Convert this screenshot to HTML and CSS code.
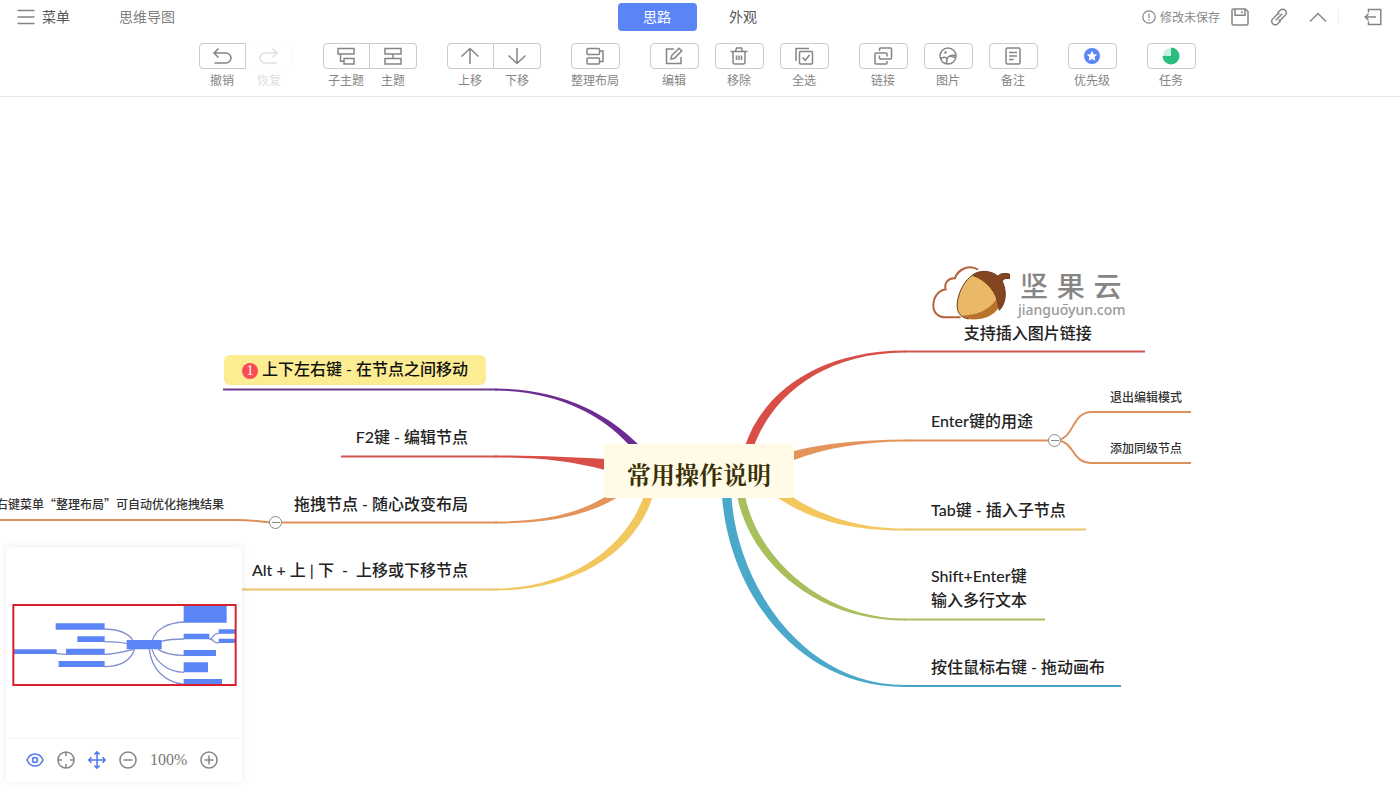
FILE: index.html
```html
<!DOCTYPE html>
<html lang="zh-CN">
<head>
<meta charset="utf-8">
<meta name="viewport" content="width=device-width, initial-scale=1">
<title>思维导图</title>
<link rel="stylesheet" href="styles.css">
</head>
<body>
<div class="app">
  <header class="header">
    <div class="topbar">
      <div class="topbar-left">
        <button class="menu-btn" type="button">
          <svg class="menu-icon" width="18" height="16" viewBox="0 0 18 16"><path d="M.5 1.5h17M.5 8h17M.5 14.5h17"/></svg>
          <span class="bar-text">菜单</span>
        </button>
        <span class="doc-title bar-text">思维导图</span>
      </div>
      <nav class="tabs">
        <button class="tab tab-active" type="button">思路</button>
        <button class="tab" type="button">外观</button>
      </nav>
      <div class="topbar-right">
        <span class="save-state">
          <svg width="14" height="14" viewBox="0 0 14 14"><circle cx="7" cy="7" r="6.2"/><path d="M7 3.5v4.4M7 9.2v1.3"/></svg>
          <span class="bar-text">修改未保存</span>
        </span>
        <button class="icon-btn" type="button" aria-label="保存"><svg width="18" height="18" viewBox="0 0 18 18"><path d="M2.500 1h11.800L17 3.500v12a1.500 1.500 0 0 1-1.500 1.500h-13A1.500 1.500 0 0 1 1 15.500v-13A1.500 1.500 0 0 1 2.500 1zM4 1v6.200h10V1M11 3v2.200"/></svg></button>
        <button class="icon-btn" type="button" aria-label="复制链接"><svg width="18" height="18" viewBox="0 0 18 18"><path d="M5.700 12.300l6.600-6.600M7.300 5.200l2.900-2.900a3.300 3.300 0 0 1 5 0a3.300 3.300 0 0 1 0 5l-4 4a3.400 3.400 0 0 1-2.600 1M10.700 12.800l-2.900 2.900a3.300 3.300 0 0 1-5 0a3.300 3.300 0 0 1 0-5l4-4a3.400 3.400 0 0 1 2.600-1"/></svg></button>
        <button class="icon-btn" type="button" aria-label="收起"><svg width="18" height="18" viewBox="0 0 18 18"><path d="M1 13.500l8-8 8 8"/></svg></button>
        <span class="divider"></span>
        <button class="icon-btn" type="button" aria-label="退出"><svg width="18" height="18" viewBox="0 0 18 18"><path d="M4.500 4.500V1.500h12.300v15H4.500v-3M12 9H1M4.500 5.800L1.200 9l3.300 3.200"/></svg></button>
      </div>
    </div>

    <div class="toolbar">
      <div class="joined">
        <button class="tool" type="button"><span class="tool-box"><svg width="20" height="18" viewBox="0 0 20 18"><path d="M6.500 1.500L2 6l4.500 4.500M2.500 6H14a5 5 0 0 1 0 10H2.500"/></svg></span><span>撤销</span></button>
        <button class="tool" type="button" disabled><span class="tool-box"><svg width="20" height="18" viewBox="0 0 20 18"><path d="M13.500 1.500L18 6l-4.500 4.500M17.500 6H6a5 5 0 0 0 0 10h11.500"/></svg></span><span>恢复</span></button>
      </div>
      <div class="joined">
        <button class="tool" type="button"><span class="tool-box"><svg width="20" height="18" viewBox="0 0 20 18"><path d="M2 1.500h16v5.500H2zM8 11.500h10V17H8zM4.500 7v7.200H8"/></svg></span><span>子主题</span></button>
        <button class="tool" type="button"><span class="tool-box"><svg width="20" height="18" viewBox="0 0 20 18"><path d="M2 1.500h16v5.500H2zM2 11.500h16V17H2zM10 7v4.500"/></svg></span><span>主题</span></button>
      </div>
      <div class="joined">
        <button class="tool" type="button"><span class="tool-box"><svg width="20" height="18" viewBox="0 0 20 18"><path d="M10 17V1.500M1.500 9.500l8.500-8 8.500 8"/></svg></span><span>上移</span></button>
        <button class="tool" type="button"><span class="tool-box"><svg width="20" height="18" viewBox="0 0 20 18"><path d="M10 1v15.500M1.500 8.500l8.500 8 8.500-8"/></svg></span><span>下移</span></button>
      </div>
      <button class="tool" type="button"><span class="tool-box"><svg width="20" height="18" viewBox="0 0 20 18"><rect x="2" y="1.500" width="12.500" height="6" rx="1"/><rect x="2" y="11" width="12.500" height="6" rx="1"/><path d="M14.500 4H18v10.500h-3.500"/></svg></span><span>整理布局</span></button>
      <div class="set">
        <button class="tool" type="button"><span class="tool-box"><svg width="20" height="18" viewBox="0 0 20 18"><path d="M10 2H2.500v14.500H17V10M7 12l.7-3.500L15 1.200l2.800 2.600-7.300 7.500z"/></svg></span><span>编辑</span></button>
        <button class="tool" type="button"><span class="tool-box"><svg width="20" height="18" viewBox="0 0 20 18"><path d="M1.500 4.500h17M4 4.500V15a2 2 0 0 0 2 2h8a2 2 0 0 0 2-2V4.500M6.500 4.200L7.500 1h5l1 3.200M7.500 8.500v4.500M10 8.500v4.500M12.500 8.500v4.500"/></svg></span><span>移除</span></button>
        <button class="tool" type="button"><span class="tool-box"><svg width="20" height="18" viewBox="0 0 20 18"><rect x="5.500" y="4.500" width="13" height="12.500" rx="1"/><path d="M2 14V1.500h13M8.500 10.500l2.800 2.800L15.500 8"/></svg></span><span>全选</span></button>
      </div>
      <div class="set">
        <button class="tool" type="button"><span class="tool-box"><svg width="20" height="18" viewBox="0 0 20 18"><path d="M6.500 4V2a1 1 0 0 1 1-1h10a1 1 0 0 1 1 1v9a1 1 0 0 1-1 1h-10a1 1 0 0 1-1-1V8.500M14 14v2a1 1 0 0 1-1 1H3a1 1 0 0 1-1-1V7a1 1 0 0 1 1-1h10a1 1 0 0 1 1 1v2.500"/></svg></span><span>链接</span></button>
        <button class="tool" type="button"><span class="tool-box"><svg width="20" height="18" viewBox="0 0 20 18"><circle cx="10" cy="9" r="8"/><circle cx="7.500" cy="5.500" r=".6"/><path d="M2.500 12c3-3 6-2 6.500.5.200 1.500-.2 3-.8 4M8.800 12.200c1-3 4.500-4.700 9-3.700M11.500 9l6 1.500"/></svg></span><span>图片</span></button>
        <button class="tool" type="button"><span class="tool-box"><svg width="20" height="18" viewBox="0 0 20 18"><rect x="3" y="1" width="14" height="16" rx="1.500"/><path d="M6 5.500h8M6 9h8M6 12.500h4.500"/></svg></span><span>备注</span></button>
      </div>
      <button class="tool" type="button"><span class="tool-box"><svg width="20" height="18" viewBox="0 0 20 18"><circle class="fill-blue" cx="10" cy="9" r="8"/><path class="fill-white" d="M10 3.800l1.600 3.400 3.700.4-2.800 2.500.8 3.700-3.300-1.900-3.300 1.900.8-3.700-2.800-2.500 3.700-.4z"/></svg></span><span>优先级</span></button>
      <button class="tool" type="button"><span class="tool-box"><svg width="20" height="18" viewBox="0 0 20 18"><circle class="fill-mint" cx="10" cy="9" r="8"/><path class="fill-green" d="M10 9V.5a8.500 8.500 0 1 1-8.500 8.500z"/></svg></span><span>任务</span></button>
    </div>
  </header>

  <main class="canvas">
    <div class="stage">
      <svg class="branches" width="1400" height="691" viewBox="0 97 1400 691">
        <g class="red">
          <path d="M745 446C762 395 815 351 905 350.500V352.500C822 353 772 397 754 446z"/>
          <path d="M605 459C570 457 540 455.500 495 455.500V457.500C540 457.500 570 461 605 470z"/>
          <path class="line" d="M904 351.500h241M341 456.500h156"/>
        </g>
        <g class="orange">
          <path d="M794 451C825 443 860 440 905 439.500V441.500C865 441.500 825 448 794 460z"/>
          <path d="M605 497C575 515 540 521.500 495 521.500V523.500C545 523.500 585 517 618 497z"/>
          <path class="line" d="M904 440.500h150C1076 440 1070 412 1092 412h99M1054 440C1076 440 1070 463 1092 463h99M497 522.500H275C262 522.500 258 520 236 520H0"/>
        </g>
        <g class="yellow">
          <path d="M791 496C812 510 850 529 905 528.500V530.500C845 531 805 517 775 496z"/>
          <path d="M644 496C624 552 565 588.500 495 588.500V590.500C570 590.500 634 556 653 496z"/>
          <path class="line" d="M904 529.500h182M220 589.500h277"/>
        </g>
        <g class="green">
          <path d="M745 496C758 560 825 619 905 618.500V620.500C820 620.500 752 567 737 496z"/>
          <path class="line" d="M904 619.500h141"/>
        </g>
        <g class="blue">
          <path d="M731.500 496C736 580 800 685 905 685V687C797 687.500 729 592 722 496z"/>
          <path class="line" d="M904 686h217"/>
        </g>
        <g class="purple">
          <path d="M639 445C606 412 560 389 495 388.500V390.500C555 391 600 413 629 445z"/>
          <path class="line" d="M223 389.500h274"/>
        </g>
      </svg>

      <div class="node root">常用操作说明</div>

      <div class="node image-node">
        <div class="brand">
          <svg class="acorn" width="80" height="58" viewBox="30 42 240 174">
            <path class="cloud" d="M122 202H76C54 202 40 187 40 167C40 142 54 122 77 118C72 99 84 84 105 85C113 59 147 41 174 59"/>
            <path class="cap" d="M158 75C175 60 214 60 234 79C237 72 250 68 268 72L269 86C257 84 248 87 247 95C260 120 260 158 238 181C235 150 190 90 158 75z"/>
            <path class="nut" d="M157 76C196 88 232 124 236 174C218 202 180 213 146 207C119 202 109 185 112 158C116 122 136 90 157 76z"/>
            <path class="nut-shade" d="M236 172C218 201 180 212 146 206C137 204 130 201 125 197C168 196 204 184 229 148C233 156 235 164 236 172z"/>
            <path class="nut-edge" d="M146 207C119 202 109 185 112 158C116 122 136 90 157 76C196 88 232 124 236 174"/>
          </svg>
          <div class="brand-words">
            <div class="brand-cn"><span>坚</span><span>果</span><span>云</span></div>
            <div class="brand-url">jiangu<span class="brand-o">o</span>yun.com</div>
          </div>
        </div>
        <span>支持插入图片链接</span>
      </div>
      <div class="node n-enter">Enter键的用途</div>
      <div class="node n-tab">Tab键 - 插入子节点</div>
      <div class="node n-shift">Shift+Enter键<br>输入多行文本</div>
      <div class="node n-drag">按住鼠标右键 - 拖动画布</div>
      <div class="node leaf n-exit">退出编辑模式</div>
      <div class="node leaf n-sibling">添加同级节点</div>

      <div class="node n-arrows"><span class="priority">1</span><span>上下左右键 - 在节点之间移动</span></div>
      <div class="node n-f2">F2键 - 编辑节点</div>
      <div class="node n-layout">拖拽节点 - 随心改变布局</div>
      <div class="node n-alt">Alt + 上 | 下&nbsp; -&nbsp; 上移或下移节点</div>
      <div class="node leaf n-auto">右键菜单“整理布局”可自动优化拖拽结果</div>

      <button class="fold fold-right" type="button" aria-label="折叠"></button>
      <button class="fold fold-left" type="button" aria-label="折叠"></button>
    </div>

    <aside class="navigator">
      <svg class="minimap" viewBox="18 21 708 573">
        <path class="mini-line" d="M313 267C350 267 385 278 398 300M313 305C345 305 365 307 380 311M168 341L200 343H313C350 342 375 334 400 328M313 380C360 380 392 362 404 328M552 246C500 248 466 270 458 300M552 297C520 297 500 300 484 304M552 346C515 346 490 338 474 328M552 397C500 395 468 365 456 328M552 433C490 425 455 385 448 328M628 297C644 297 634 280 656 280M628 297C644 297 636 309 656 309"/>
        <path class="mini-node" d="M167 250h147v19H167zM232 289h82v17h-82zM198 326h116v17H198zM40 328h130v14H40zM176 363h138v18H176zM380 300h105v28H380zM551 197h129v51H551zM551 281h77v17h-77zM551 330h97v18h-97zM551 367h73v30h-73zM551 417h115v16H551zM656 268h50v13h-50zM656 296h50v13h-50z"/>
        <rect class="mini-view" x="40" y="195" width="667" height="240"/>
      </svg>
      <div class="nav-tools">
        <button class="nav-btn nav-on" type="button" aria-label="预览"><svg width="18" height="18" viewBox="0 0 18 18"><path d="M1 9c3.500-8 12.500-8 16 0c-3.500 8-12.500 8-16 0z"/><circle cx="9" cy="9" r="2.500"/></svg></button>
        <button class="nav-btn" type="button" aria-label="定位"><svg width="18" height="18" viewBox="0 0 18 18"><circle cx="9" cy="9" r="8"/><path d="M9 1v4M9 13v4M1 9h4M13 9h4"/></svg></button>
        <button class="nav-btn nav-on" type="button" aria-label="移动"><svg width="18" height="18" viewBox="0 0 18 18"><path d="M9 1v16M1 9h16M6.300 3.500L9 .8l2.700 2.700M6.300 14.500L9 17.200l2.700-2.700M3.500 6.300L.8 9l2.700 2.700M14.500 6.300L17.200 9l-2.700 2.700"/></svg></button>
        <button class="nav-btn" type="button" aria-label="缩小"><svg width="18" height="18" viewBox="0 0 18 18"><circle cx="9" cy="9" r="8"/><path d="M4.500 9h9"/></svg></button>
        <span class="zoom-value">100%</span>
        <button class="nav-btn" type="button" aria-label="放大"><svg width="18" height="18" viewBox="0 0 18 18"><circle cx="9" cy="9" r="8"/><path d="M4.500 9h9M9 4.500v9"/></svg></button>
      </div>
    </aside>
  </main>
</div>
</body>
</html>
```
FILE: styles.css
```css
* { box-sizing: border-box; }

body {
  margin: 0;
  background: #fff;
  color: #333;
  font-family: "Noto Sans CJK SC", sans-serif;
  font-size: 12px;
}

button {
  margin: 0;
  padding: 0;
  border: 0;
  background: none;
  color: inherit;
  font: inherit;
  cursor: pointer;
}

svg {
  display: block;
  fill: none;
  stroke: #858585;
  stroke-width: 1.5;
}

.app {
  display: flex;
  flex-direction: column;
  height: 100vh;
  overflow: hidden;
}

/* Header */
.header {
  flex: none;
  border-bottom: 1px solid #e8e8eb;
  padding-bottom: 7px;
}

.topbar {
  display: grid;
  grid-template-columns: 1fr auto 1fr;
  align-items: center;
  height: 34px;
}

.topbar-left {
  display: flex;
  align-items: center;
  gap: 49px;
  padding-left: 17px;
  font-size: 14px;
  line-height: 20px;
}

.bar-text { padding-bottom: 2px; }

.menu-btn {
  display: flex;
  align-items: center;
  gap: 7px;
  color: #555;
}

.doc-title { color: #808080; }

.tabs { display: flex; gap: 7px; }

.tab {
  width: 79px;
  height: 28px;
  padding-bottom: 2px;
  border-radius: 4px;
  color: #555;
  font-size: 14px;
}

.tab-active { background: #5b84f6; color: #fff; }

.topbar-right {
  display: flex;
  justify-content: flex-end;
  align-items: center;
  gap: 21px;
  padding-right: 18px;
}

.save-state {
  display: flex;
  align-items: center;
  gap: 4px;
  margin-right: -10px;
  color: #888;
  white-space: nowrap;
}

.save-state svg { stroke-width: 1.2; }

.divider {
  width: 1px;
  height: 14px;
  margin: 0 4px 0 -10px;
  background: #eee;
}

/* Toolbar */
.toolbar {
  display: flex;
  justify-content: center;
  gap: 30px;
  padding: 9px 6px 0 0;
}

.joined { display: flex; }
.set { display: flex; gap: 16px; }

.tool {
  display: flex;
  flex-direction: column;
  align-items: center;
  gap: 2px;
  color: #858585;
  line-height: 18px;
  white-space: nowrap;
}

.tool-box {
  display: flex;
  justify-content: center;
  align-items: center;
  width: 49px;
  height: 26px;
  border: 1px solid #ccc;
  border-radius: 4px;
}

.joined .tool-box { width: 47px; }
.joined .tool:first-child .tool-box { border-radius: 4px 0 0 4px; }
.joined .tool:last-child .tool-box { border-left: 0; border-radius: 0 4px 4px 0; }

.tool:disabled { opacity: 0.25; }
.tool:disabled .tool-box { border-color: #eee; }

.tool .fill-blue { fill: #5b84f6; stroke: none; }
.tool .fill-white { fill: #fff; stroke: none; }
.tool .fill-mint { fill: #c8f0de; stroke: none; }
.tool .fill-green { fill: #2bbd80; stroke: none; }

/* Mind map */
.canvas {
  position: relative;
  flex: 1;
  overflow: hidden;
}

.stage {
  position: absolute;
  top: 0;
  left: 50%;
  width: 1400px;
  margin-left: -700px;
}

.branches { stroke: none; }
.branches .line { fill: none; stroke-width: 2; }
.red { fill: #d84f47; stroke: #cf5450; }
.orange { fill: #e4935a; stroke: #df8f5c; }
.yellow { fill: #f1c75e; stroke: #eac368; }
.green { fill: #a8bf5c; stroke: #a8bf5c; }
.blue { fill: #4aa9ca; stroke: #4aa0c2; }
.purple { fill: #6d2c91; stroke: #6b3a8c; }
.branches path:not(.line) { stroke: none; }

.node {
  position: absolute;
  color: #222;
  font-family: Lato, "Noto Sans CJK SC", sans-serif;
  font-size: 16px;
  font-weight: 500;
  line-height: 24px;
  white-space: nowrap;
}

.leaf {
  color: #333;
  font-family: "Noto Sans CJK SC", sans-serif;
  font-size: 12px;
  line-height: 18px;
}

.root {
  top: 347px;
  left: 604px;
  padding: 15px 23px 9px;
  border-radius: 4px;
  background: #fffbe6;
  color: #3b2f08;
  font-family: "Noto Serif CJK SC", "Liberation Serif", "Noto Sans CJK SC", serif;
  font-size: 24px;
  font-weight: 700;
  line-height: 30px;
}

.image-node {
  display: flex;
  flex-direction: column;
  align-items: center;
  top: 167px;
  left: 930px;
}

.brand { display: flex; gap: 8px; height: 57px; }
.acorn .cloud { stroke: #b5653d; stroke-width: 6; }
.acorn .cap { fill: #85451f; stroke: #6b3517; stroke-width: 3; }
.acorn .nut { fill: #e9b967; stroke: none; }
.acorn .nut-shade { fill: #b8732f; stroke: none; }
.acorn .nut-edge { stroke: #6b3b1c; stroke-width: 3; }

.brand-words { color: #868686; }

.brand-cn {
  display: flex;
  justify-content: space-between;
  padding: 2px 4px 0 2px;
  font-size: 28px;
  line-height: 40px;
}

.brand-url {
  color: #999;
  font-family: "Noto Sans", sans-serif;
  font-size: 14px;
  line-height: 8px;
}

.brand-o { position: relative; }

.brand-o::before {
  content: "";
  position: absolute;
  top: 4px;
  left: 3px;
  width: 5px;
  height: 1px;
  background: #999;
}

.n-enter { top: 312px; left: 931px; }
.n-tab { top: 401px; left: 931px; }
.n-shift { top: 467px; left: 931px; }
.n-drag { top: 558px; left: 931px; }
.n-exit { top: 291px; left: 1110px; }
.n-sibling { top: 342px; left: 1110px; }
.n-f2 { top: 328px; right: 932px; }
.n-layout { top: 395px; right: 932px; }
.n-alt { top: 461px; right: 932px; }
.n-auto { top: 398px; right: 1176px; }

.n-arrows {
  display: flex;
  align-items: center;
  gap: 4px;
  top: 258px;
  right: 914px;
  padding: 2px 18px 4px;
  border-radius: 6px;
  background: #fcec92;
  color: #111;
}

.priority {
  width: 16px;
  height: 16px;
  margin-top: 4px;
  border-radius: 50%;
  background: #fa4b55;
  color: #fff;
  font-family: "Liberation Serif", serif;
  font-size: 14px;
  line-height: 16px;
  text-align: center;
}

.fold {
  position: absolute;
  width: 13px;
  height: 13px;
  border: 1px solid #888;
  border-radius: 50%;
  background: linear-gradient(#888, #888) center / 8px 1px no-repeat #fff;
}

.fold-right { top: 337px; left: 1048px; }
.fold-left { top: 419px; left: 269px; }

/* Navigator */
.navigator {
  position: absolute;
  bottom: 6px;
  left: 6px;
  width: 236px;
  border-radius: 4px;
  background: #fff;
  box-shadow: 0 0 8px rgba(0, 0, 0, 0.08);
}

.minimap { width: 100%; stroke: none; }
.mini-line { stroke: #8390cf; stroke-width: 4; }
.mini-node { fill: #5b84f6; }
.mini-view { stroke: #d9202f; stroke-width: 6; }

.nav-tools {
  display: flex;
  align-items: center;
  gap: 13px;
  height: 44px;
  padding: 0 20px 2px;
  border-top: 1px solid #f4f4f4;
}

.nav-on svg { stroke: #4f78e8; }

.zoom-value {
  color: #777;
  font-family: "Liberation Serif", serif;
  font-size: 16px;
}
```
